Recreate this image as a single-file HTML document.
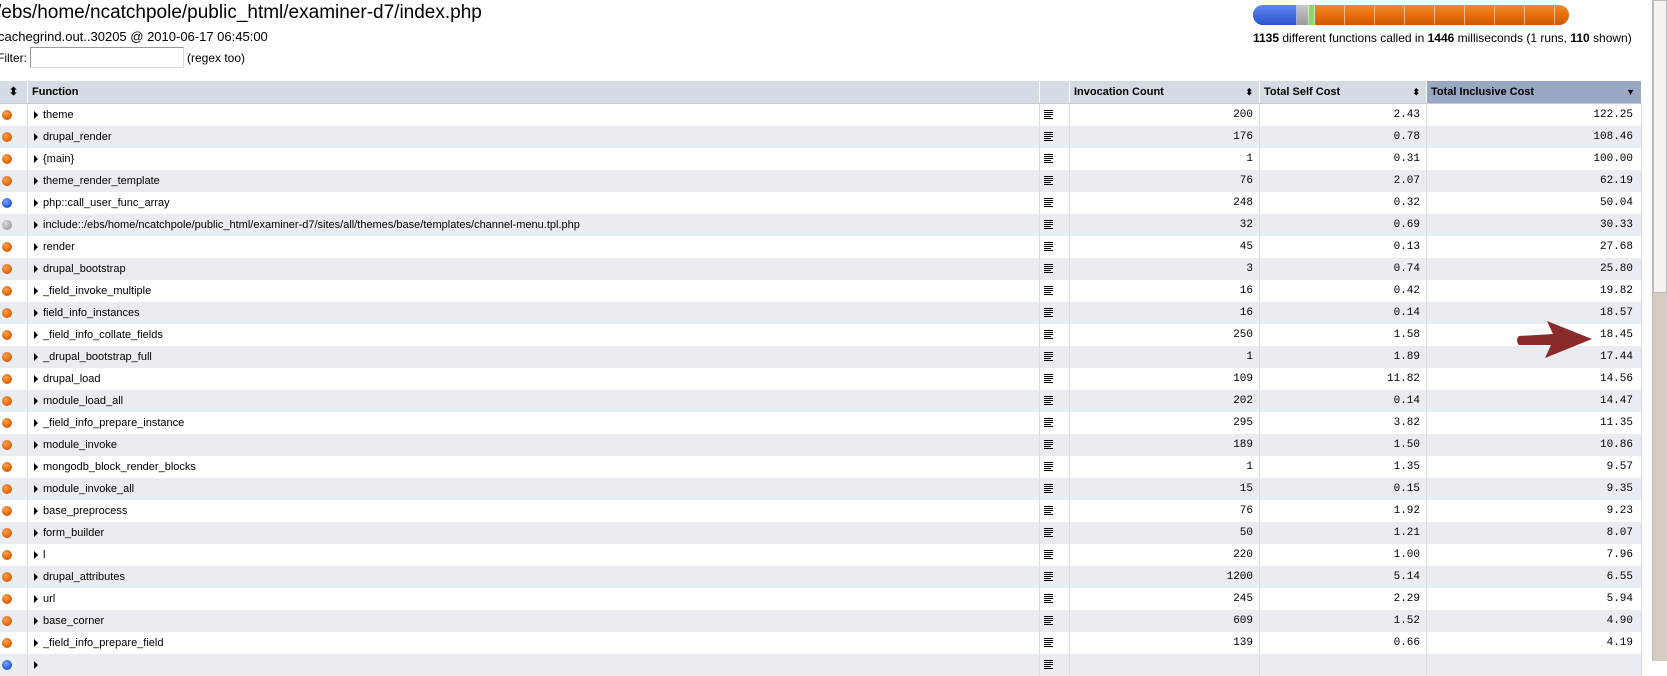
<!DOCTYPE html>
<html><head><meta charset="utf-8"><style>
*{margin:0;padding:0;box-sizing:border-box}
body{width:1667px;height:661px;overflow:hidden;background:#fff;font-family:"Liberation Sans",sans-serif;color:#000;position:relative}
.t{position:absolute;left:-4px;top:2px;font-size:19px}
.s{position:absolute;left:-2px;top:29px;font-size:13px}
.f{position:absolute;left:-3px;top:51px;font-size:12px}
.f input{position:absolute;left:33px;top:-4px;width:154px;height:21px;border:1px solid #999;border-right-color:#ddd;border-bottom-color:#ddd}
.f span{position:absolute;left:190px;top:0;white-space:nowrap}
.bar{position:absolute;left:1253px;top:5px;width:316px;height:20px;border-radius:10px;overflow:hidden;display:flex;background:linear-gradient(#f08a2a,#e46a0a 60%,#c95a05)}
.bar div{height:100%;border-right:1px solid rgba(255,255,255,.5)}
.st{position:absolute;left:1253px;top:31px;font-size:12px;white-space:nowrap}
.tbl{position:absolute;left:0;top:81px;width:1642px}
.r{display:flex;height:22px;font-size:11px;line-height:22px}
.r>div{border-right:1px solid #d9dde2;height:100%;position:relative}
.h{height:23px;background:#d5dbe3;font-weight:bold;border-bottom:1px solid #c8ccd2}
.h>div{border-right:1px solid #fff!important;padding-left:4px;line-height:22px}
.r:nth-child(odd):not(.h){background:#e9ecf0}
.c1{width:28px}.c3{width:30px}.c4{width:190px;text-align:right;padding-right:6px}.c5{width:167px;text-align:right;padding-right:6px}.c6{width:215px;text-align:right;padding-right:8px}
.n{font-family:"Liberation Mono",monospace;font-size:11px}
.d{position:absolute;left:2px;top:6px;width:10px;height:10px;border-radius:50%;background:radial-gradient(circle at 40% 35%,#ffa24a,#e2670c 60%,#b9520a)}
.b{background:radial-gradient(circle at 40% 35%,#7aa2ff,#2d5fd6 60%,#1c40a0)}
.g{background:radial-gradient(circle at 40% 35%,#ddd,#aaa 60%,#888)}
.c2{width:1012px;padding-left:15px}
.c2:before{content:"";position:absolute;left:6px;top:7px;border-left:4px solid #000;border-top:4px solid transparent;border-bottom:4px solid transparent}
.h .c2:before{display:none}
.h .c2{padding-left:4px}
.ic{position:absolute;left:4px;top:6px;width:9px;height:10px;background:repeating-linear-gradient(#000 0 1px,transparent 1px 2px)}
.ic:after{content:"";position:absolute;right:0;top:1px;width:2px;height:9px;background:repeating-linear-gradient(transparent 0 2px,#fff 2px 3px)}
.h .c4,.h .c5,.h .c6{text-align:left}
.sa{position:absolute;right:6px;top:0;font-size:9px}
.sb{position:absolute;left:1652px;top:0;width:15px;height:661px;background:#d4ccc3;border-left:1px solid #bbb}
.sb div{height:293px;background:#f4f3f1;border:1px solid #bbb}
</style></head><body>
<div class="t">/ebs/home/ncatchpole/public_html/examiner-d7/index.php</div>
<div class="s">cachegrind.out..30205 @ 2010-06-17 06:45:00</div>
<div class="f">Filter: <input><span>(regex too)</span></div>
<div class="bar"><div style="width:44px;background:linear-gradient(#5d86ef,#2b55cc)"></div><div style="width:12px;background:linear-gradient(#c8c8c8,#9a9a9a)"></div><div style="width:6px;background:#8fd56e"></div><div style="width:30px"></div><div style="width:30px"></div><div style="width:30px"></div><div style="width:30px"></div><div style="width:30px"></div><div style="width:30px"></div><div style="width:30px"></div><div style="width:30px"></div></div>
<div class="st"><b>1135</b> different functions called in <b>1446</b> milliseconds (1 runs, <b>110</b> shown)</div>
<div class="tbl">
<div class="r h"><div class="c1" style="text-align:center;padding:0">⬍</div><div class="c2">Function</div><div class="c3"></div><div class="c4">Invocation Count<span class="sa">⬍</span></div><div class="c5">Total Self Cost<span class="sa">⬍</span></div><div class="c6" style="background:#9aa7c3">Total Inclusive Cost<span class="sa">▼</span></div></div>
<div class="r"><div class="c1"><i class="d"></i></div><div class="c2">theme</div><div class="c3"><i class="ic"></i></div><div class="c4 n">200</div><div class="c5 n">2.43</div><div class="c6 n">122.25</div></div>
<div class="r"><div class="c1"><i class="d"></i></div><div class="c2">drupal_render</div><div class="c3"><i class="ic"></i></div><div class="c4 n">176</div><div class="c5 n">0.78</div><div class="c6 n">108.46</div></div>
<div class="r"><div class="c1"><i class="d"></i></div><div class="c2">{main}</div><div class="c3"><i class="ic"></i></div><div class="c4 n">1</div><div class="c5 n">0.31</div><div class="c6 n">100.00</div></div>
<div class="r"><div class="c1"><i class="d"></i></div><div class="c2">theme_render_template</div><div class="c3"><i class="ic"></i></div><div class="c4 n">76</div><div class="c5 n">2.07</div><div class="c6 n">62.19</div></div>
<div class="r"><div class="c1"><i class="d b"></i></div><div class="c2">php::call_user_func_array</div><div class="c3"><i class="ic"></i></div><div class="c4 n">248</div><div class="c5 n">0.32</div><div class="c6 n">50.04</div></div>
<div class="r"><div class="c1"><i class="d g"></i></div><div class="c2">include::/ebs/home/ncatchpole/public_html/examiner-d7/sites/all/themes/base/templates/channel-menu.tpl.php</div><div class="c3"><i class="ic"></i></div><div class="c4 n">32</div><div class="c5 n">0.69</div><div class="c6 n">30.33</div></div>
<div class="r"><div class="c1"><i class="d"></i></div><div class="c2">render</div><div class="c3"><i class="ic"></i></div><div class="c4 n">45</div><div class="c5 n">0.13</div><div class="c6 n">27.68</div></div>
<div class="r"><div class="c1"><i class="d"></i></div><div class="c2">drupal_bootstrap</div><div class="c3"><i class="ic"></i></div><div class="c4 n">3</div><div class="c5 n">0.74</div><div class="c6 n">25.80</div></div>
<div class="r"><div class="c1"><i class="d"></i></div><div class="c2">_field_invoke_multiple</div><div class="c3"><i class="ic"></i></div><div class="c4 n">16</div><div class="c5 n">0.42</div><div class="c6 n">19.82</div></div>
<div class="r"><div class="c1"><i class="d"></i></div><div class="c2">field_info_instances</div><div class="c3"><i class="ic"></i></div><div class="c4 n">16</div><div class="c5 n">0.14</div><div class="c6 n">18.57</div></div>
<div class="r"><div class="c1"><i class="d"></i></div><div class="c2">_field_info_collate_fields</div><div class="c3"><i class="ic"></i></div><div class="c4 n">250</div><div class="c5 n">1.58</div><div class="c6 n">18.45</div></div>
<div class="r"><div class="c1"><i class="d"></i></div><div class="c2">_drupal_bootstrap_full</div><div class="c3"><i class="ic"></i></div><div class="c4 n">1</div><div class="c5 n">1.89</div><div class="c6 n">17.44</div></div>
<div class="r"><div class="c1"><i class="d"></i></div><div class="c2">drupal_load</div><div class="c3"><i class="ic"></i></div><div class="c4 n">109</div><div class="c5 n">11.82</div><div class="c6 n">14.56</div></div>
<div class="r"><div class="c1"><i class="d"></i></div><div class="c2">module_load_all</div><div class="c3"><i class="ic"></i></div><div class="c4 n">202</div><div class="c5 n">0.14</div><div class="c6 n">14.47</div></div>
<div class="r"><div class="c1"><i class="d"></i></div><div class="c2">_field_info_prepare_instance</div><div class="c3"><i class="ic"></i></div><div class="c4 n">295</div><div class="c5 n">3.82</div><div class="c6 n">11.35</div></div>
<div class="r"><div class="c1"><i class="d"></i></div><div class="c2">module_invoke</div><div class="c3"><i class="ic"></i></div><div class="c4 n">189</div><div class="c5 n">1.50</div><div class="c6 n">10.86</div></div>
<div class="r"><div class="c1"><i class="d"></i></div><div class="c2">mongodb_block_render_blocks</div><div class="c3"><i class="ic"></i></div><div class="c4 n">1</div><div class="c5 n">1.35</div><div class="c6 n">9.57</div></div>
<div class="r"><div class="c1"><i class="d"></i></div><div class="c2">module_invoke_all</div><div class="c3"><i class="ic"></i></div><div class="c4 n">15</div><div class="c5 n">0.15</div><div class="c6 n">9.35</div></div>
<div class="r"><div class="c1"><i class="d"></i></div><div class="c2">base_preprocess</div><div class="c3"><i class="ic"></i></div><div class="c4 n">76</div><div class="c5 n">1.92</div><div class="c6 n">9.23</div></div>
<div class="r"><div class="c1"><i class="d"></i></div><div class="c2">form_builder</div><div class="c3"><i class="ic"></i></div><div class="c4 n">50</div><div class="c5 n">1.21</div><div class="c6 n">8.07</div></div>
<div class="r"><div class="c1"><i class="d"></i></div><div class="c2">l</div><div class="c3"><i class="ic"></i></div><div class="c4 n">220</div><div class="c5 n">1.00</div><div class="c6 n">7.96</div></div>
<div class="r"><div class="c1"><i class="d"></i></div><div class="c2">drupal_attributes</div><div class="c3"><i class="ic"></i></div><div class="c4 n">1200</div><div class="c5 n">5.14</div><div class="c6 n">6.55</div></div>
<div class="r"><div class="c1"><i class="d"></i></div><div class="c2">url</div><div class="c3"><i class="ic"></i></div><div class="c4 n">245</div><div class="c5 n">2.29</div><div class="c6 n">5.94</div></div>
<div class="r"><div class="c1"><i class="d"></i></div><div class="c2">base_corner</div><div class="c3"><i class="ic"></i></div><div class="c4 n">609</div><div class="c5 n">1.52</div><div class="c6 n">4.90</div></div>
<div class="r"><div class="c1"><i class="d"></i></div><div class="c2">_field_info_prepare_field</div><div class="c3"><i class="ic"></i></div><div class="c4 n">139</div><div class="c5 n">0.66</div><div class="c6 n">4.19</div></div>
<div class="r"><div class="c1"><i class="d b"></i></div><div class="c2"></div><div class="c3"><i class="ic"></i></div><div class="c4 n"></div><div class="c5 n"></div><div class="c6 n"></div></div>
</div>
<svg style="position:absolute;left:1515px;top:320px;z-index:5" width="78" height="40"><path d="M4 16 L38 14 L32 1 L77 19 L30 38 L36 25 L4 25 Q0 20 4 16Z" fill="#8a2a2a"/></svg>
<div class="sb"><div></div></div>
</body></html>
